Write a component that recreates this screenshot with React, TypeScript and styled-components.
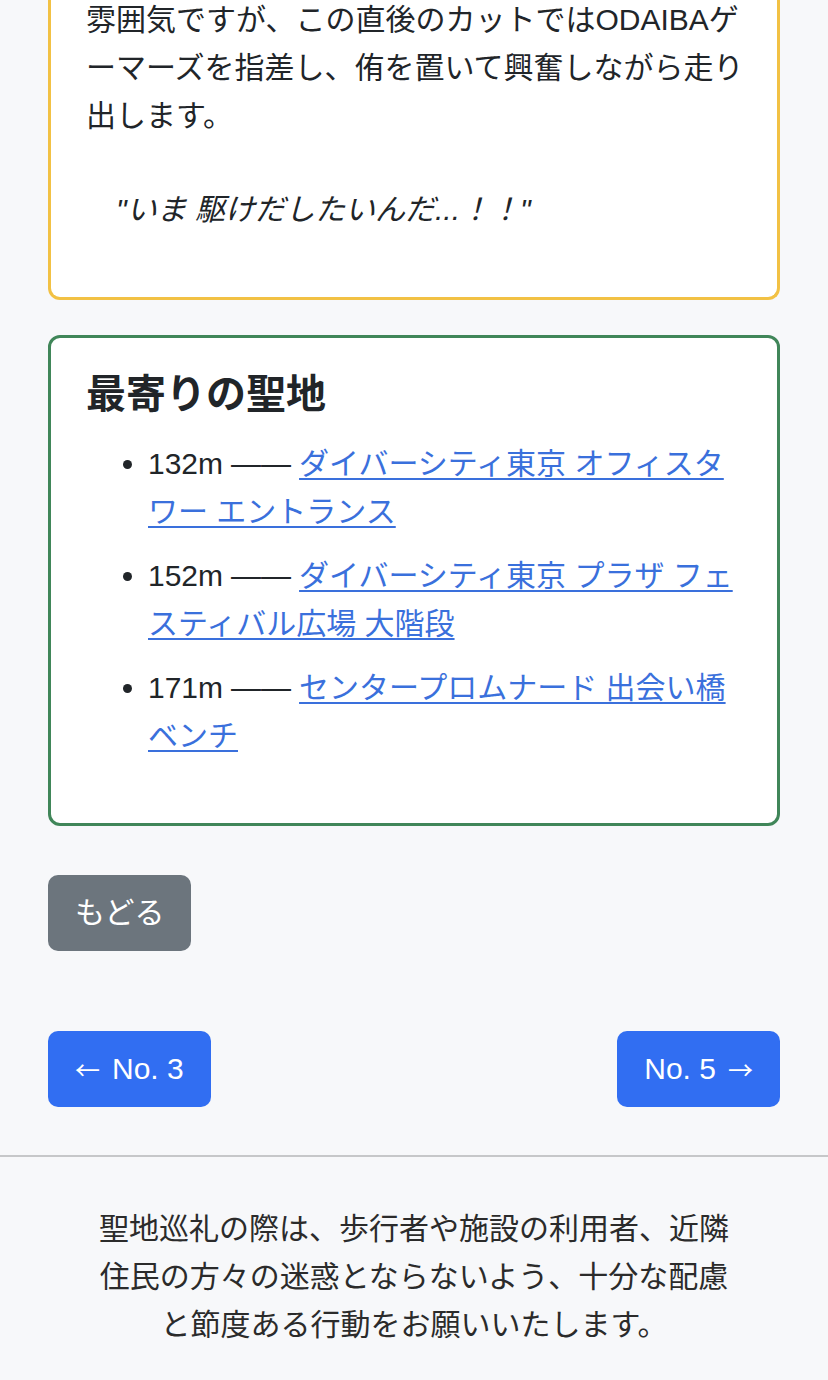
import React from "react";
import styled, { createGlobalStyle } from "styled-components";

const Global = createGlobalStyle`
  html, body {
    margin: 0;
    padding: 0;
    background: #f7f8fa;
  }
  body {
    font-family: "Liberation Sans", "Noto Sans CJK JP", sans-serif;
    font-size: 30px;
    line-height: 48px;
    color: #212529;
  }
`;

const Main = styled.main`
  padding: 0 48px;
  display: flex;
  flex-direction: column;
`;

const Card = styled.section<{ $color: string; $continued?: boolean }>`
  background: #fff;
  border: 3px solid ${(p) => p.$color};
  border-radius: 12px;
  padding: 32px 30px 32px 35px;
  ${(p) =>
    p.$continued &&
    `
    border-top: none;
    border-top-left-radius: 0;
    border-top-right-radius: 0;
    padding-top: 0;
    margin-top: -4px;
  `}
  & + & {
    margin-top: 35px;
  }
`;

const Paragraph = styled.p`
  margin: 0 0 46px;
`;

const Quote = styled.p`
  margin: 0 0 31px;
  padding-left: 30px;
  font-style: italic;
`;

const Heading = styled.h2`
  margin: 0 0 22px;
  font-size: 40px;
  line-height: 48px;
  font-weight: 700;
`;

const List = styled.ul`
  margin: 0 0 31px;
  padding-left: 62px;
`;

const Item = styled.li`
  & + & {
    margin-top: 16px;
  }
`;

const Dash = styled.span`
  display: inline-block;
  margin: 0 8px;
`;

const Link = styled.a`
  color: #3a70dc;
  text-decoration: underline;
  text-decoration-thickness: 2px;
  text-underline-offset: 4px;
`;

const BackRow = styled.div`
  display: flex;
  margin-top: 49px;
`;

const NavRow = styled.div`
  display: flex;
  justify-content: space-between;
  margin-top: 80px;
`;

const Button = styled.a<{ $variant: "grey" | "blue" }>`
  display: inline-flex;
  align-items: center;
  gap: 12px;
  height: 76px;
  padding: 0 27px;
  box-sizing: border-box;
  border-radius: 10px;
  color: #fff;
  text-decoration: none;
  font-size: 30px;
  background: ${(p) => (p.$variant === "grey" ? "#6c757d" : "#316ef2")};
`;

const Arrow = styled.span`
  font-family: "Noto Sans CJK JP", sans-serif;
  font-size: 25px;
  line-height: 1;
`;

const Footer = styled.footer`
  margin-top: 48px;
  border-top: 2px solid #c6c7c9;
  padding: 48px 0;
  display: flex;
  justify-content: center;
`;

const FooterText = styled.p`
  margin: 0;
  max-width: 640px;
  text-align: center;
  color: #2b2b2b;
`;

export default function App() {
  return (
    <>
      <Global />
      <Main>
        <Card $color="#f2c144" $continued>
          <Paragraph>
            雰囲気ですが、この直後のカットではODAIBAゲーマーズを指差し、侑を置いて興奮しながら走り出します。
          </Paragraph>
          <Quote>"いま 駆けだしたいんだ...！！"</Quote>
        </Card>
        <Card $color="#408659">
          <Heading>最寄りの聖地</Heading>
          <List>
            <Item>
              132m<Dash>——</Dash><Link href="#">ダイバーシティ東京 オフィスタワー エントランス</Link>
            </Item>
            <Item>
              152m<Dash>——</Dash><Link href="#">ダイバーシティ東京 プラザ フェスティバル広場 大階段</Link>
            </Item>
            <Item>
              171m<Dash>——</Dash><Link href="#">センタープロムナード 出会い橋 ベンチ</Link>
            </Item>
          </List>
        </Card>
        <BackRow>
          <Button $variant="grey" href="#">もどる</Button>
        </BackRow>
        <NavRow>
          <Button $variant="blue" href="#">
            <Arrow>←</Arrow>
            <span>No. 3</span>
          </Button>
          <Button $variant="blue" href="#">
            <span>No. 5</span>
            <Arrow>→</Arrow>
          </Button>
        </NavRow>
      </Main>
      <Footer>
        <FooterText>
          聖地巡礼の際は、歩行者や施設の利用者、近隣住民の方々の迷惑とならないよう、十分な配慮と節度ある行動をお願いいたします。
        </FooterText>
      </Footer>
    </>
  );
}
